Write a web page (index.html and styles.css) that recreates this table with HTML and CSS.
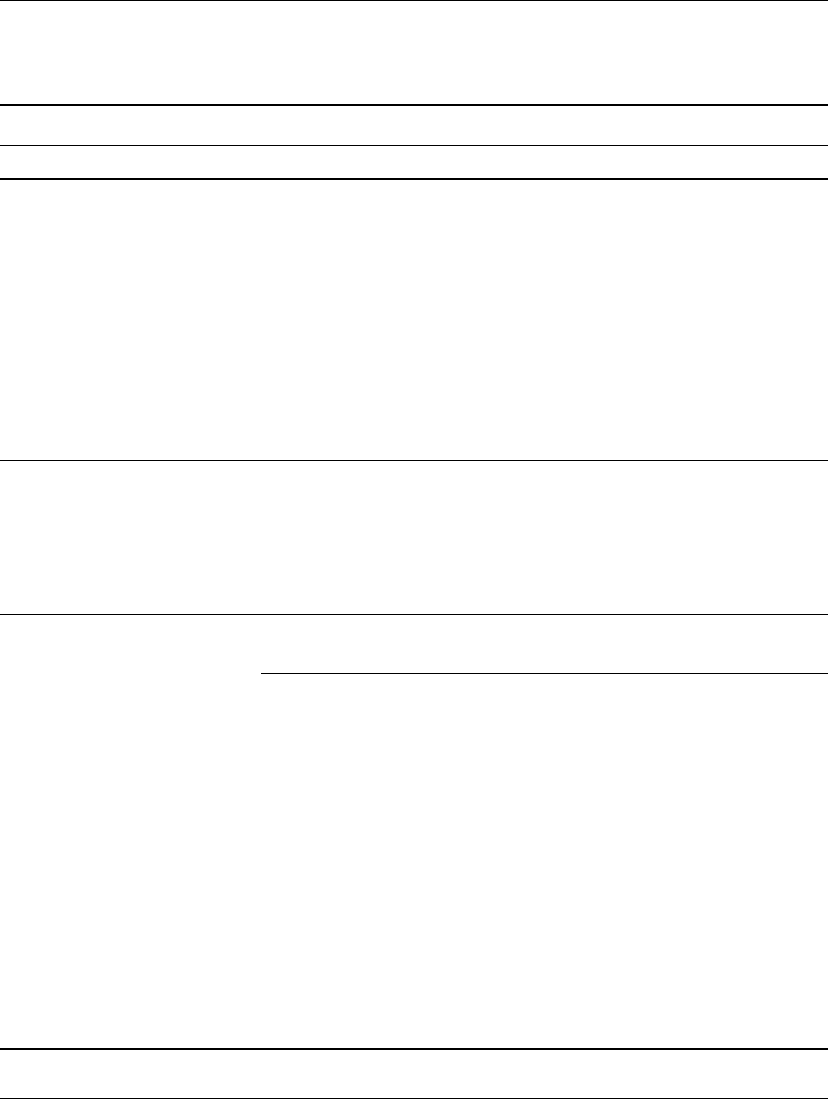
FILE: index.html
```html
<!DOCTYPE html>
<html lang="en">
<head>
  <meta charset="UTF-8" />
  <title>Table</title>
  <link rel="stylesheet" href="styles.css">
</head>
<body>
  <div class="sheet">
    <div class="rule thin"></div>
    <div class="row caption"></div>
    <div class="rule thick"></div>
    <div class="row head-a"></div>
    <div class="rule thin"></div>
    <div class="row head-b"></div>
    <div class="rule thick"></div>
    <div class="row body-a"></div>
    <div class="rule thin"></div>
    <div class="row body-b"></div>
    <div class="rule thin"></div>
    <div class="group">
      <div class="group-label"></div>
      <div class="group-cells">
        <div class="row sub-head"></div>
        <div class="rule thin"></div>
        <div class="row sub-body"></div>
      </div>
    </div>
    <div class="rule thick"></div>
    <div class="row foot"></div>
    <div class="rule thin"></div>
  </div>
</body>
</html>
```
FILE: styles.css
```css
body {
  margin: 0;
  background-color: #fff;
  font-family: "Liberation Serif", serif;
  color: #000;
}
.sheet {
  display: flex;
  flex-direction: column;
  width: 100%;
}
.rule {
  background-color: #000;
}
.rule.thin { height: 1px; }
.rule.thick { height: 2px; }

.caption { height: 103px; }
.head-a { height: 39px; }
.head-b { height: 32px; }
.body-a { height: 280px; }
.body-b { height: 153px; }

.group {
  display: grid;
  grid-template-columns: 261px 1fr;
}
.group-cells {
  display: flex;
  flex-direction: column;
}
.sub-head { height: 58px; }
.sub-body { height: 374px; }

.foot { height: 48px; }
```
